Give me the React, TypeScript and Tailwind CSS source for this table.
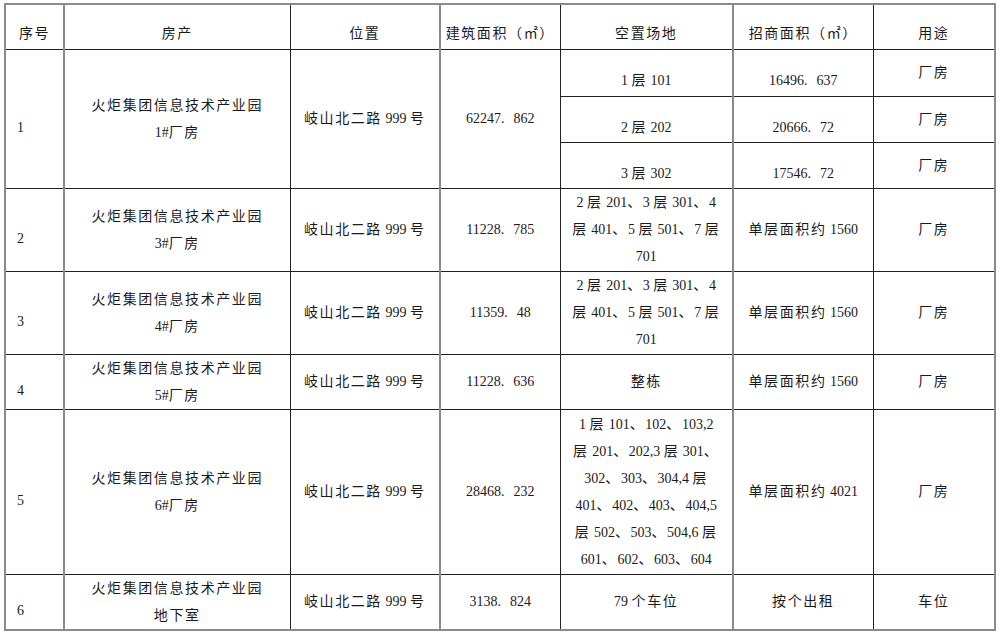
import React from "react";

const CJK = /([\u3000-\u303f\u3300-\u33ff\u4e00-\u9fff\uff00-\uffef]+)/;

function T({ s }: { s: string }) {
  const parts = s.split(CJK);
  return (
    <>
      {parts.map((p, i) =>
        CJK.test(p) ? (
          <span key={i} className="tracking-[1.6px]">
            {p}
          </span>
        ) : (
          <span key={i}>{p}</span>
        )
      )}
    </>
  );
}

function Num({ s }: { s: string }) {
  const [a, b] = s.split(".");
  return (
    <span className="whitespace-nowrap">
      {a}.<span className="inline-block w-[9px]" />
      {b}
    </span>
  );
}

function Lines({ lines }: { lines: string[] }) {
  return (
    <>
      {lines.map((l, i) => (
        <div key={i} className="whitespace-nowrap">
          <T s={l} />
        </div>
      ))}
    </>
  );
}

const base = "border border-[#222] p-0 text-center align-middle";
const gl = "border-l-2 border-l-[#8a8a8a]";

type Row = {
  seq: string;
  name: string[];
  area: string;
  vacant: string[];
  invest: string;
  use: string;
  h: string;
};

const rows: Row[] = [
  {
    seq: "2",
    name: ["火炬集团信息技术产业园", "3#厂房"],
    area: "11228.785",
    vacant: ["2 层 201、3 层 301、4", "层 401、5 层 501、7 层", "701"],
    invest: "单层面积约 1560",
    use: "厂房",
    h: "h-[83px]",
  },
  {
    seq: "3",
    name: ["火炬集团信息技术产业园", "4#厂房"],
    area: "11359.48",
    vacant: ["2 层 201、3 层 301、4", "层 401、5 层 501、7 层", "701"],
    invest: "单层面积约 1560",
    use: "厂房",
    h: "h-[83px]",
  },
  {
    seq: "4",
    name: ["火炬集团信息技术产业园", "5#厂房"],
    area: "11228.636",
    vacant: ["整栋"],
    invest: "单层面积约 1560",
    use: "厂房",
    h: "h-[55px]",
  },
  {
    seq: "5",
    name: ["火炬集团信息技术产业园", "6#厂房"],
    area: "28468.232",
    vacant: [
      "1 层 101、102、103,2",
      "层 201、202,3 层 301、",
      "302、303、304,4 层",
      "401、402、403、404,5",
      "层 502、503、504,6 层",
      "601、602、603、604",
    ],
    invest: "单层面积约 4021",
    use: "厂房",
    h: "h-[165px]",
  },
  {
    seq: "6",
    name: ["火炬集团信息技术产业园", "地下室"],
    area: "3138.824",
    vacant: ["79 个车位"],
    invest: "按个出租",
    use: "车位",
    h: "h-[54px]",
  },
];

export default function App() {
  return (
    <div className="w-[999px] h-[633px] bg-white overflow-hidden pt-[3px] pl-[4px]">
      <table
        className="table-fixed border-collapse border-2 border-[#8a8a8a] w-[991px] text-[14px] leading-[27px] text-[#1a1a1a]"
        style={{ fontFamily: '"Liberation Serif", "Noto Sans CJK SC", serif' }}
      >
        <colgroup>
          <col className="w-[59px]" />
          <col className="w-[226px]" />
          <col className="w-[150px]" />
          <col className="w-[120px]" />
          <col className="w-[173px]" />
          <col className="w-[140px]" />
          <col className="w-[122px]" />
        </colgroup>
        <tbody>
          <tr className="h-[45px]">
            <td className={`${base} pt-[14px]`}>
              <T s="序号" />
            </td>
            <td className={`${base} ${gl} pt-[14px]`}>
              <T s="房产" />
            </td>
            <td className={`${base} pt-[14px]`}>
              <T s="位置" />
            </td>
            <td className={`${base} ${gl} pt-[14px]`}>
              <T s="建筑面积（㎡）" />
            </td>
            <td className={`${base} pt-[14px]`}>
              <T s="空置场地" />
            </td>
            <td className={`${base} ${gl} pt-[14px]`}>
              <T s="招商面积（㎡）" />
            </td>
            <td className={`${base} pt-[14px]`}>
              <T s="用途" />
            </td>
          </tr>
          <tr className="h-[47px]">
            <td rowSpan={3} className={`${base} text-left pl-[11px] pt-[18px]`}>
              1
            </td>
            <td rowSpan={3} className={`${base} ${gl}`}>
              <Lines lines={["火炬集团信息技术产业园", "1#厂房"]} />
            </td>
            <td rowSpan={3} className={base}>
              <T s="岐山北二路 999 号" />
            </td>
            <td rowSpan={3} className={`${base} ${gl}`}>
              <Num s="62247.862" />
            </td>
            <td className={`${base} pt-[16px]`}>
              <T s="1 层 101" />
            </td>
            <td className={`${base} ${gl} pt-[16px]`}>
              <Num s="16496.637" />
            </td>
            <td className={base}>
              <T s="厂房" />
            </td>
          </tr>
          <tr className="h-[46px]">
            <td className={`${base} pt-[16px]`}>
              <T s="2 层 202" />
            </td>
            <td className={`${base} ${gl} pt-[16px]`}>
              <Num s="20666.72" />
            </td>
            <td className={base}>
              <T s="厂房" />
            </td>
          </tr>
          <tr className="h-[46px]">
            <td className={`${base} pt-[16px]`}>
              <T s="3 层 302" />
            </td>
            <td className={`${base} ${gl} pt-[16px]`}>
              <Num s="17546.72" />
            </td>
            <td className={base}>
              <T s="厂房" />
            </td>
          </tr>
          {rows.map((r) => (
            <tr key={r.seq} className={r.h}>
              <td className={`${base} text-left pl-[11px] pt-[18px]`}>{r.seq}</td>
              <td className={`${base} ${gl}`}>
                <Lines lines={r.name} />
              </td>
              <td className={base}>
                <T s="岐山北二路 999 号" />
              </td>
              <td className={`${base} ${gl}`}>
                <Num s={r.area} />
              </td>
              <td className={base}>
                <Lines lines={r.vacant} />
              </td>
              <td className={`${base} ${gl}`}>
                <T s={r.invest} />
              </td>
              <td className={base}>
                <T s={r.use} />
              </td>
            </tr>
          ))}
        </tbody>
      </table>
    </div>
  );
}
